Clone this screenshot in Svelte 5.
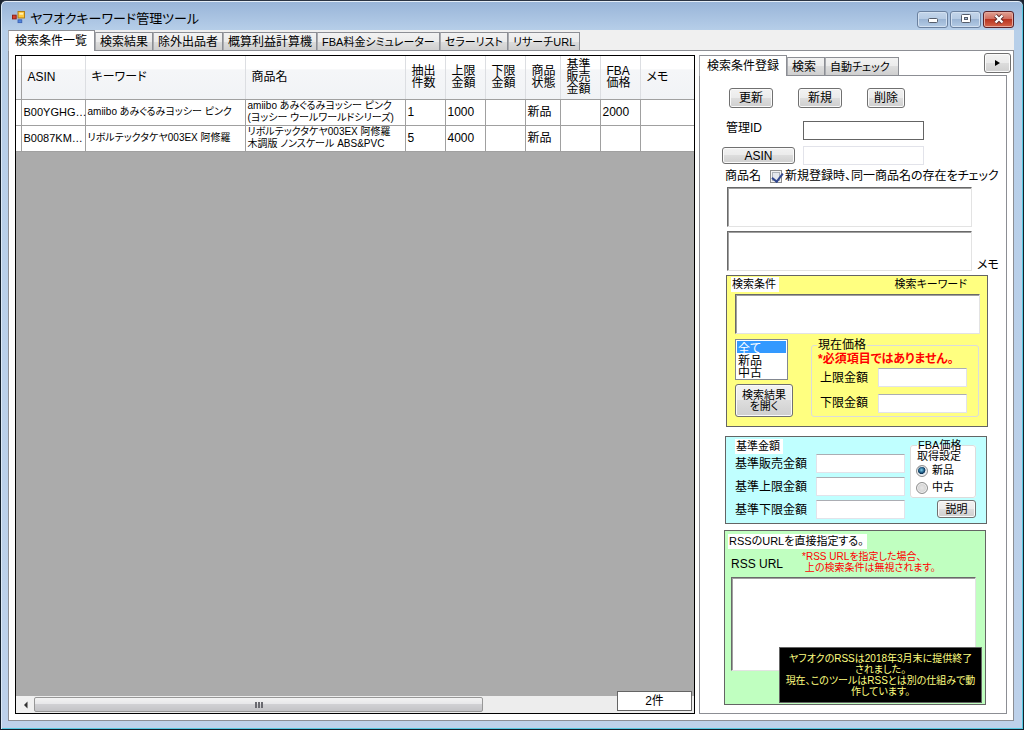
<script lang="ts">
  const mainTabs = [
    "検索条件一覧",
    "検索結果",
    "除外出品者",
    "概算利益計算機",
    "FBA料金シミュレーター",
    "セラーリスト",
    "リサーチURL",
  ];
  const sideTabs = ["検索条件登録", "検索", "自動チェック"];

  const columns = [
    ["ASIN"],
    ["キーワード"],
    ["商品名"],
    ["抽出", "件数"],
    ["上限", "金額"],
    ["下限", "金額"],
    ["商品", "状態"],
    ["基準", "販売", "金額"],
    ["FBA", "価格"],
    ["メモ"],
  ];

  const rows = [
    {
      asin: "B00YGHG…",
      keyword: "amiibo あみぐるみヨッシー ピンク",
      name: ["amiibo あみぐるみヨッシー ピンク", "(ヨッシー ウールワールドシリーズ)"],
      rest: ["1", "1000", "", "新品", "", "2000", ""],
    },
    {
      asin: "B0087KM…",
      keyword: "リボルテックタケヤ003EX 阿修羅",
      name: ["リボルテックタケヤ003EX 阿修羅", "木調版 ノンスケール ABS&PVC"],
      rest: ["5", "4000", "", "新品", "", "", ""],
    },
  ];

  const basePrices = ["基準販売金額", "基準上限金額", "基準下限金額"];

  let mainTab = $state(0);
  let sideTab = $state(0);
  let checkName = $state(true);
  let condition = $state("全て");
  let fbaCondition = $state("新品");
</script>

<div class="window">
  <header class="titlebar">
    <svg class="titlebar__icon" viewBox="0 0 14 14" aria-hidden="true">
      <rect x="6.5" y="0.5" width="7" height="7" fill="#ffc93c" stroke="#b07a10" />
      <rect x="8" y="2" width="4" height="2" fill="#fff0b0" />
      <rect x="0.5" y="4.5" width="4" height="4" fill="#d8402c" stroke="#8e1d12" />
      <rect x="6.5" y="9.5" width="4" height="3" fill="#4f86e0" stroke="#3c62b4" />
    </svg>
    <h1 class="titlebar__text">ヤフオクキーワード管理ツール</h1>
    <div class="titlebar__controls">
      <button class="caption" aria-label="最小化">
        <svg viewBox="0 0 12 10"><rect x="1.5" y="4.5" width="9" height="4" rx="1" fill="#fff" stroke="#555d6b" /></svg>
      </button>
      <button class="caption" aria-label="最大化">
        <svg viewBox="0 0 12 10">
          <rect x="1.5" y="0.5" width="9" height="8" rx="1" fill="#fff" stroke="#555d6b" />
          <rect x="4.5" y="3.5" width="3" height="2" fill="#a9bdd6" stroke="#555d6b" />
        </svg>
      </button>
      <button class="caption caption--close" aria-label="閉じる">
        <svg viewBox="0 0 12 10">
          <path d="M2.5 1.5 L9.5 8.5 M9.5 1.5 L2.5 8.5" stroke="#5a2a2a" stroke-width="4" />
          <path d="M2.5 1.5 L9.5 8.5 M9.5 1.5 L2.5 8.5" stroke="#fff" stroke-width="2.4" />
        </svg>
      </button>
    </div>
  </header>

  <main class="client">
    <div class="tabs" role="tablist">
      {#each mainTabs as tab, i}
        <button
          class="tab"
          class:tab--on={mainTab === i}
          class:tab--kana={i > 3}
          role="tab"
          aria-selected={mainTab === i}
          onclick={() => (mainTab = i)}>{tab}</button
        >
      {/each}
    </div>

    <div class="page">
      <section class="list">
        <table>
          <colgroup>
            <col class="w-head" />
            <col class="w-asin" />
            <col class="w-text" />
            <col class="w-text" />
            <col class="w-num" />
            <col class="w-num" />
            <col class="w-num" />
            <col class="w-state" />
            <col class="w-num" />
            <col class="w-num" />
            <col />
          </colgroup>
          <thead>
            <tr>
              <td></td>
              {#each columns as col}
                <th scope="col">{#each col as line}<span>{line}</span>{/each}</th>
              {/each}
            </tr>
          </thead>
          <tbody>
            {#each rows as row}
              <tr>
                <td></td>
                <td class="asin">{row.asin}</td>
                <td class="kana">{row.keyword}</td>
                <td class="kana">{#each row.name as line}<span>{line}</span>{/each}</td>
                {#each row.rest as cell}
                  <td>{cell}</td>
                {/each}
              </tr>
            {/each}
          </tbody>
        </table>
        <div class="scroll">
          <button class="scroll__arrow" aria-label="左へ">
            <svg viewBox="0 0 5 8"><path d="M4.5 0.5 L1 4 L4.5 7.5 Z" fill="#333" /></svg>
          </button>
          <div class="scroll__thumb"><i></i><i></i><i></i></div>
        </div>
        <output class="count">2件</output>
      </section>

      <aside class="side">
        <div class="tabs" role="tablist">
          {#each sideTabs as tab, i}
            <button
              class="tab"
              class:tab--on={sideTab === i}
              class:tab--kana={i > 1}
              role="tab"
              aria-selected={sideTab === i}
              onclick={() => (sideTab = i)}>{tab}</button
            >
          {/each}
        </div>

        <form class="form" onsubmit={(e) => e.preventDefault()}>
          <div class="actions">
            <button class="btn">更新</button>
            <button class="btn">新規</button>
            <button class="btn">削除</button>
          </div>

          <div class="ids">
            <label for="manage-id">管理ID</label>
            <input id="manage-id" class="dark" type="text" />
            <button class="btn btn--asin">ASIN</button>
            <input type="text" aria-label="ASIN" />
          </div>

          <div class="check">
            <label for="item-name">商品名</label>
            <input id="same-name" type="checkbox" bind:checked={checkName} />
            <label for="same-name">新規登録時、同一商品名の存在をチェック</label>
          </div>
          <textarea id="item-name" class="area"></textarea>
          <div class="memo">
            <textarea id="memo" class="area"></textarea>
            <label for="memo">メモ</label>
          </div>

          <section class="box box--yellow">
            <div class="box__head">
              <h2>検索条件</h2>
              <label for="keyword">検索キーワード</label>
            </div>
            <textarea id="keyword" class="area"></textarea>
            <div class="cond">
              <div class="cond__left">
                <select size="3" aria-label="商品状態" bind:value={condition}>
                  <option>全て</option>
                  <option>新品</option>
                  <option>中古</option>
                </select>
                <button class="btn btn--open">検索結果<br />を開く</button>
              </div>
              <fieldset class="price">
                <legend>現在価格</legend>
                <p class="warn">*必須項目ではありません。</p>
                <label for="price-max">上限金額</label>
                <input id="price-max" type="text" />
                <label for="price-min">下限金額</label>
                <input id="price-min" type="text" />
              </fieldset>
            </div>
          </section>

          <section class="box box--cyan">
            <div class="base">
              <h2>基準金額</h2>
              {#each basePrices as label, i}
                <div class="base__row">
                  <label for="base-{i}">{label}</label>
                  <input id="base-{i}" type="text" />
                </div>
              {/each}
            </div>
            <div class="fba">
              <fieldset>
                <legend>FBA価格</legend>
                <p>取得設定</p>
                {#each ["新品", "中古"] as value}
                  <label><input type="radio" name="fba" {value} bind:group={fbaCondition} />{value}</label>
                {/each}
              </fieldset>
              <button class="btn btn--small">説明</button>
            </div>
          </section>

          <section class="box box--green">
            <h2>RSSのURLを直接指定する。</h2>
            <div class="rss">
              <label for="rss-url">RSS URL</label>
              <p>*RSS URLを指定した場合、<br />&nbsp;上の検索条件は無視されます。</p>
            </div>
            <textarea id="rss-url" class="area"></textarea>
            <div class="notice">
              ヤフオクのRSSは2018年3月末に提供終了<br />されました。<br />
              現在、このツールはRSSとは別の仕組みで動<br />作しています。
            </div>
          </section>
        </form>
      </aside>

      <button class="btn expand" aria-label="展開">
        <svg viewBox="0 0 5 6"><path d="M0 0 L5 3 L0 6 Z" fill="#000" /></svg>
      </button>
    </div>
  </main>
</div>

<style>
  :global(body) {
    background: #1b2330;
  }

  .window,
  .window * {
    box-sizing: border-box;
  }

  .window {
    display: flex;
    flex-direction: column;
    min-height: 100vh;
    padding: 0 9px 8px 7px;
    border: 1px solid #14202c;
    border-top-color: #2b3444;
    border-radius: 6px 6px 0 0;
    background: linear-gradient(#98b4d8, #b7cfe9 30px, #bdd1ea);
    box-shadow: inset 0 1px #e4edf7, inset 1px 0 #dce9f6, inset -1px -1px #55c8e0;
    font: 12px/12px "Liberation Sans", "Noto Sans CJK JP", sans-serif;
    font-feature-settings: "palt";
    color: #000;
  }

  button,
  input,
  select,
  textarea {
    font: inherit;
    font-feature-settings: inherit;
    color: inherit;
    margin: 0;
  }

  h1,
  h2,
  p {
    margin: 0;
    font-size: inherit;
    font-weight: normal;
  }

  .titlebar {
    display: flex;
    align-items: center;
    height: 29px;
    padding: 4px 0 0 4px;
  }

  .titlebar__icon {
    width: 13px;
    height: 13px;
  }

  .titlebar__text {
    flex: 1;
    margin-left: 5px;
    padding-top: 2px;
    font-size: 13px;
    line-height: 16px;
  }

  .titlebar__controls {
    display: flex;
    gap: 2px;
    padding-top: 3px;
  }

  .caption {
    display: grid;
    place-items: center;
    width: 31px;
    height: 17px;
    padding: 0;
    border: 1px solid #6b819f;
    border-radius: 3px;
    background: linear-gradient(#c3d5ea, #b5cae3 50%, #9bb5d4 50%, #b4cbe5);
    box-shadow: inset 0 0 0 1px #d3e1f1;
  }

  .caption svg {
    width: 12px;
    height: 10px;
  }

  .caption--close {
    border-color: #5b2228;
    background: linear-gradient(#e0a193, #d0695a 50%, #b93420 50%, #d4654a);
    box-shadow: inset 0 0 0 1px #e6aa9e;
  }

  .client {
    flex: 1;
    display: flex;
    flex-direction: column;
    background: #f0f0f0;
  }

  .tabs {
    display: flex;
    align-items: flex-end;
    height: 20px;
  }

  .tab {
    height: 18px;
    padding: 1px 4px 0;
    border: 1px solid #8c8e94;
    border-bottom: 0;
    border-left-color: #a9abb0;
    background: linear-gradient(#f2f2f2, #ebebeb 50%, #dddddd 50%, #cfcfcf);
    white-space: nowrap;
  }

  .tab--kana {
    font-size: 11px;
  }

  .tab--on {
    position: relative;
    z-index: 1;
    height: 21px;
    margin-bottom: -1px;
    padding: 0 7px 1px 6px;
    background: #fff;
  }

  .page {
    position: relative;
    flex: 1;
    display: flex;
    gap: 4px;
    padding: 4px 6px 6px;
    border: 1px solid #8c8e94;
    background: #fff;
  }

  /* list */

  .list {
    position: relative;
    flex: 1;
    min-width: 0;
    display: flex;
    flex-direction: column;
    border: 1px solid #000;
    background: #ababab;
  }

  table {
    width: 100%;
    table-layout: fixed;
    border-collapse: collapse;
    background: #fff;
  }

  .w-head { width: 5px; }
  .w-asin { width: 64px; }
  .w-text { width: 160px; }
  .w-num { width: 40px; }
  .w-state { width: 35px; }

  th,
  td {
    padding: 0 0 0 2px;
    border: 1px solid #a0a0a0;
    border-left: 0;
    text-align: left;
    font-weight: normal;
    white-space: nowrap;
  }

  td:first-child {
    padding: 0;
  }

  tr > :last-child {
    border-right: 0;
  }

  th span,
  td span {
    display: block;
  }

  thead tr {
    height: 43px;
    background: linear-gradient(#fff 30%, #f5f6f8 32%, #f1f3f6);
  }

  thead th,
  thead td {
    border-top: 0;
    border-right-color: #dcdee2;
  }

  thead td {
    border-right-color: #a0a0a0;
  }

  thead th {
    padding-left: 6px;
  }

  tbody tr {
    height: 26px;
  }

  .asin {
    font-size: 11px;
  }

  .kana {
    font-size: 10px;
  }

  .scroll {
    display: flex;
    height: 17px;
    margin-top: auto;
    background: #ededed;
  }

  .scroll__arrow {
    display: grid;
    place-items: center;
    width: 18px;
    padding: 0;
    border: 0;
    background: #f0f0f0;
  }

  .scroll__arrow svg {
    width: 5px;
    height: 8px;
  }

  .scroll__thumb {
    display: flex;
    align-items: center;
    justify-content: center;
    gap: 1px;
    width: 68%;
    max-width: 449px;
    margin: 1px 0;
    border: 1px solid #979797;
    border-radius: 2px;
    background: linear-gradient(#f3f3f3, #e6e6e8 50%, #d0d0d3 50%, #c3c3c6);
  }

  .scroll__thumb i {
    width: 2px;
    height: 6px;
    background: #6a6a70;
  }

  .count {
    position: absolute;
    right: 2px;
    bottom: 2px;
    width: 75px;
    padding: 3px 0;
    border: 1px solid #646464;
    background: #fff;
    text-align: center;
  }

  /* side panel */

  .side {
    display: flex;
    flex-direction: column;
    width: 308px;
  }

  .side .tab--on {
    padding: 0 7px 1px;
  }

  .side .tab:not(.tab--on) {
    padding-right: 8px;
  }

  .expand {
    position: absolute;
    top: 2px;
    right: 2px;
    width: 27px;
    height: 17px;
  }

  .expand svg {
    width: 5px;
    height: 6px;
  }

  .form {
    flex: 1;
    display: flex;
    flex-direction: column;
    padding: 12px 18px 7px 25px;
    border: 1px solid #8c8e94;
    background: #fff;
  }

  .btn {
    display: grid;
    place-items: center;
    height: 20px;
    padding: 0;
    border: 1px solid #707070;
    border-radius: 3px;
    background: linear-gradient(#f2f2f2, #ebebeb 50%, #dddddd 50%, #cfcfcf);
    box-shadow: inset 0 0 0 1px #fafafa;
  }

  .btn--asin { height: 17px; }
  .btn--open { width: 58px; height: 33px; font-size: 11px; line-height: 11px; }
  .btn--small { width: 39px; height: 18px; font-size: 11px; }

  .actions {
    display: grid;
    grid-template-columns: 44px 44px 38px;
    gap: 25px;
    padding-left: 4px;
  }

  input[type="text"] {
    min-width: 0;
    height: 19px;
    padding: 1px 3px;
    border: 1px solid #e2e3ea;
    border-top-color: #abadb3;
    background: #fff;
  }

  .ids {
    display: grid;
    grid-template-columns: 73px 121px;
    align-items: center;
    gap: 6px 8px;
    margin: 13px 0 0 -3px;
  }

  .ids label {
    padding: 0 0 6px 4px;
  }

  .ids input[type="text"] {
    border-color: #e2e3ea;
  }

  .ids input.dark {
    border-color: #646464;
  }

  .check {
    display: flex;
    align-items: center;
    height: 22px;
    white-space: nowrap;
  }

  .check input {
    appearance: none;
    width: 13px;
    height: 13px;
    margin: 0 3px 0 9px;
    border: 1px solid #8e8f8f;
    background: #e4e8ee;
    box-shadow: inset 0 0 0 1px #f4f4f4, inset 0 0 0 2px #aeb3b9;
  }

  .check input:checked::after {
    content: "";
    display: block;
    width: 5px;
    height: 9px;
    margin: 0 0 0 3px;
    border: solid #31478f;
    border-width: 0 2px 2px 0;
    transform: rotate(38deg);
  }

  .area {
    display: block;
    width: 245px;
    height: 40px;
    padding: 2px;
    border: 1px solid #e3e3e3;
    border-top-color: #696969;
    border-left-color: #696969;
    box-shadow: inset 1px 1px #a0a0a0;
    background: #fff;
    resize: none;
  }

  .form > .area,
  .memo {
    margin-left: 2px;
  }

  .memo {
    display: flex;
    align-items: flex-end;
    gap: 5px;
    margin-top: 4px;
    margin-right: -12px;
  }

  .box {
    width: 262px;
    border: 1px solid #646464;
  }

  .box h2 {
    align-self: flex-start;
    width: fit-content;
    padding: 2px 3px 2px 1px;
    background: #fff;
    font-size: 11px;
    line-height: 11px;
  }

  .box--yellow {
    margin: 4px 0 0 1px;
    padding: 1px 8px 9px;
    background: #ffff80;
  }

  .box__head {
    display: flex;
    justify-content: space-between;
    margin: 0 12px 2px -4px;
    font-size: 11px;
  }

  .box__head label {
    padding-top: 1px;
  }

  .cond {
    display: flex;
    justify-content: space-between;
    margin-top: 5px;
  }

  .cond__left {
    display: flex;
    flex-direction: column;
    gap: 4px;
  }

  select {
    width: 53px;
    height: 41px;
    padding: 1px;
    border: 1px solid #828790;
    border-radius: 0;
    background: #fff;
    overflow: hidden;
    outline: 0;
  }

  option {
    display: flex;
    align-items: center;
    min-height: 12px;
    height: 12px;
    padding: 0 1px;
  }

  option:checked {
    background: #3399ff linear-gradient(#3399ff, #3399ff);
    color: #fff;
  }

  fieldset {
    margin: 0;
    border: 1px solid #dcdcdc;
    border-radius: 3px;
  }

  legend {
    padding: 0 1px;
  }

  .price {
    display: grid;
    grid-template-columns: 54px 89px;
    align-items: center;
    gap: 6px 4px;
    width: 168px;
    padding: 2px 5px 3px 8px;
  }

  .price legend {
    margin-left: -3px;
  }

  .warn {
    grid-column: 1 / 3;
    margin: 0 0 -3px -2px;
    color: #f00;
    font-weight: bold;
    white-space: nowrap;
  }

  .price label {
    white-space: nowrap;
  }

  .box--cyan {
    display: flex;
    justify-content: space-between;
    margin-top: 9px;
    padding: 2px 10px 4px 9px;
    background: #c0ffff;
  }

  .base {
    display: flex;
    flex-direction: column;
    gap: 4px;
  }

  .base h2 {
    margin-bottom: -4px;
  }

  .base__row {
    display: grid;
    grid-template-columns: 77px 89px;
    align-items: center;
    gap: 4px;
  }

  .fba {
    display: flex;
    flex-direction: column;
    align-items: flex-end;
    gap: 2px;
    padding-top: 1px;
  }

  .fba fieldset {
    width: 66px;
    padding: 0 4px 1px 6px;
    background: #fff;
    font-size: 11px;
    line-height: 11px;
  }

  .fba label {
    display: flex;
    align-items: center;
    gap: 4px;
    height: 17px;
  }

  .fba input {
    appearance: none;
    width: 12px;
    height: 12px;
    margin-left: -1px;
    border: 1px solid #8e8f8f;
    border-radius: 50%;
    background: radial-gradient(#e6e6e6, #c8c8c8);
    box-shadow: inset 0 0 0 1px #f2f2f2;
  }

  .fba input:checked {
    background: radial-gradient(circle at 45% 40%, #7fd0ee, #17517a 35%, #0d2f4f 45%, #dfe7ee 52%);
  }

  .box--green {
    position: relative;
    margin: 6px 0 0 -1px;
    padding: 3px 6px 33px;
    background: #c0ffc0;
  }

  .box--green h2 {
    margin-left: -3px;
  }

  .rss {
    display: flex;
    gap: 19px;
    height: 28px;
    padding-top: 2px;
  }

  .rss label {
    padding-top: 7px;
  }

  .rss p {
    color: #f00;
    font-size: 10px;
    line-height: 11px;
    white-space: nowrap;
  }

  .box--green .area {
    height: 94px;
  }

  .notice {
    position: absolute;
    right: 3px;
    bottom: 1px;
    width: 203px;
    height: 56px;
    padding: 5px 2px;
    border: 1px solid #646464;
    background: #000;
    color: #ffff80;
    font-size: 10px;
    line-height: 11px;
    text-align: center;
    white-space: nowrap;
  }
</style>
